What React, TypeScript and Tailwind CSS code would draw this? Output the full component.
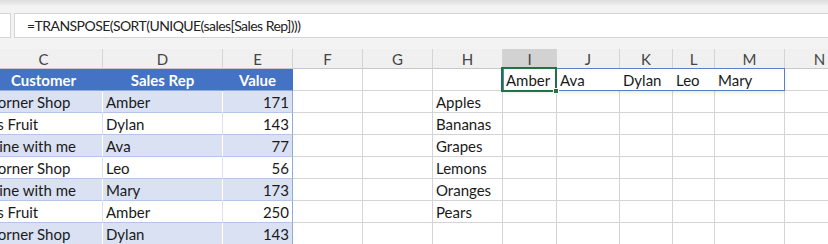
import React from 'react';

const cols = ['C', 'D', 'E', 'F', 'G', 'H', 'I', 'J', 'K', 'L', 'M', 'N'];
const grid = 'grid grid-cols-[118px_120px_70px_70px_70px_70px_54px_63px_53px_42px_70px_70px]';

const rows = [
  { customer: 'Corner Shop', rep: 'Amber', value: 171, fruit: 'Apples' },
  { customer: "J's Fruit", rep: 'Dylan', value: 143, fruit: 'Bananas' },
  { customer: 'Dine with me', rep: 'Ava', value: 77, fruit: 'Grapes' },
  { customer: 'Corner Shop', rep: 'Leo', value: 56, fruit: 'Lemons' },
  { customer: 'Dine with me', rep: 'Mary', value: 173, fruit: 'Oranges' },
  { customer: "J's Fruit", rep: 'Amber', value: 250, fruit: 'Pears' },
  { customer: 'Corner Shop', rep: 'Dylan', value: 143, fruit: '' },
];

const spill = ['Amber', 'Ava', 'Dylan', 'Leo', 'Mary'];

const Cell: React.FC<{ children?: React.ReactNode; className?: string }> = ({ children, className = '' }) => (
  <div className={`h-[22px] border-r border-b border-[#d4d4d4] px-[3px] leading-[23px] whitespace-nowrap overflow-hidden ${className}`}>
    {children}
  </div>
);

export default function App() {
  return (
    <div className="w-[828px] h-[244px] overflow-hidden bg-white text-[15px] text-[#1a1a1a] font-['Lato','Liberation_Sans',sans-serif]">
      {/* ribbon edge */}
      <div className="h-[13px] bg-gradient-to-b from-[#dedede] via-[#f3f3f3] to-[#f3f3f3]" />

      {/* formula bar */}
      <div className="flex h-[25px] bg-[#f3f3f3]">
        <div className="w-[11px] bg-white border-y border-r border-[#d4d4d4]" />
        <div className="w-[3px]" />
        <div className="flex-1 bg-white border-y border-l border-[#d4d4d4] pl-[12px] leading-[24px] text-[14px] tracking-[-0.55px] text-[#222]">
          =TRANSPOSE(SORT(UNIQUE(sales[Sales Rep])))
        </div>
      </div>

      <div className="h-[11px] bg-[#f3f3f3]" />

      <div className="-ml-[15px]">
        {/* column headers */}
        <div className={`${grid} h-[20px] bg-[#f0f0f0] border-b border-[#c8c8c8] text-[#444]`}>
          {cols.map((c) => (
            <div
              key={c}
              className={`border-r border-[#d4d4d4] text-center leading-[20px] ${c === 'I' ? 'bg-[#d2d2d2]' : ''}`}
            >
              {c}
            </div>
          ))}
        </div>

        {/* row 1: table header + spill */}
        <div className={grid}>
          <Cell className="bg-[#4472c4] text-white font-bold text-center border-r-[#4472c4] border-b-[#8ea9db]">Customer</Cell>
          <Cell className="bg-[#4472c4] text-white font-bold text-center border-r-[#4472c4] border-b-[#8ea9db]">Sales Rep</Cell>
          <Cell className="bg-[#4472c4] text-white font-bold text-center border-r-[#4472c4] border-b-[#8ea9db]">Value</Cell>
          <Cell />
          <Cell />
          <Cell />
          <div className="col-span-5 relative grid grid-cols-[54px_63px_53px_42px_70px] shadow-[0_2px_3px_rgba(0,0,0,0.08)]">
            {spill.map((s, i) => (
              <Cell key={s} className={i === 4 ? '' : 'border-r-transparent'}>{s}</Cell>
            ))}
            <div className="absolute -top-px left-0 right-0 bottom-0 border border-[#5b7fc7] pointer-events-none" />
            <div className="absolute -top-[2px] -left-[2px] w-[56px] h-[25px] border-2 border-[#217346] pointer-events-none">
              <div className="absolute -right-[4px] -bottom-[4px] w-[6px] h-[6px] bg-[#217346] border border-white" />
            </div>
          </div>
          <Cell />
        </div>

        {/* data rows */}
        {rows.map((r, i) => {
          const band = i % 2 === 0;
          const tbl = band
            ? 'bg-[#d9e1f2] border-r-white border-b-[#b4c6e7]'
            : 'bg-white border-r-[#d9e1f2] border-b-[#b4c6e7]';
          return (
            <div key={i} className={grid}>
              <Cell className={tbl}>{r.customer}</Cell>
              <Cell className={tbl}>{r.rep}</Cell>
              <Cell className={`${tbl} text-right !border-r-[#8ea9db]`}>{r.value}</Cell>
              <Cell />
              <Cell />
              <Cell>{r.fruit}</Cell>
              <Cell />
              <Cell />
              <Cell />
              <Cell />
              <Cell />
              <Cell />
            </div>
          );
        })}
      </div>
    </div>
  );
}
